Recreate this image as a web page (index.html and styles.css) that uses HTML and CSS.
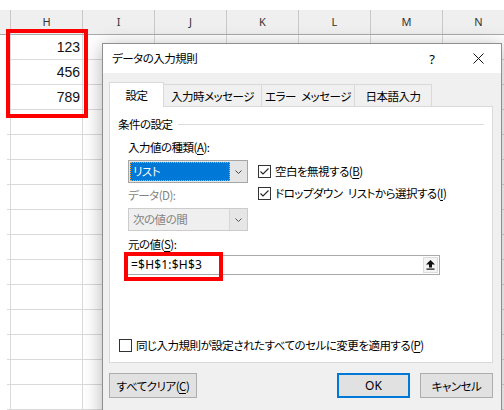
FILE: index.html
```html
<!DOCTYPE html>
<html lang="ja">
<head>
<meta charset="utf-8">
<title>データの入力規則</title>
<link rel="stylesheet" href="styles.css">
</head>
<body>
<div class="sheet">
  <div class="topband"></div>
  <div class="hdr">
    <div class="hcorner"></div>
    <div class="hc">H</div><div class="hc">I</div><div class="hc">J</div><div class="hc">K</div><div class="hc">L</div><div class="hc">M</div><div class="hc">N</div>
  </div>
  <div class="row"><div class="rh"></div><div class="c num">123</div><div class="c"></div><div class="c"></div><div class="c"></div><div class="c"></div><div class="c"></div><div class="c"></div></div>
  <div class="row"><div class="rh"></div><div class="c num">456</div><div class="c"></div><div class="c"></div><div class="c"></div><div class="c"></div><div class="c"></div><div class="c"></div></div>
  <div class="row"><div class="rh"></div><div class="c num">789</div><div class="c"></div><div class="c"></div><div class="c"></div><div class="c"></div><div class="c"></div><div class="c"></div></div>
  <div class="row"><div class="rh"></div><div class="c"></div><div class="c"></div><div class="c"></div><div class="c"></div><div class="c"></div><div class="c"></div><div class="c"></div></div>
  <div class="row"><div class="rh"></div><div class="c"></div><div class="c"></div><div class="c"></div><div class="c"></div><div class="c"></div><div class="c"></div><div class="c"></div></div>
  <div class="row"><div class="rh"></div><div class="c"></div><div class="c"></div><div class="c"></div><div class="c"></div><div class="c"></div><div class="c"></div><div class="c"></div></div>
  <div class="row"><div class="rh"></div><div class="c"></div><div class="c"></div><div class="c"></div><div class="c"></div><div class="c"></div><div class="c"></div><div class="c"></div></div>
  <div class="row"><div class="rh"></div><div class="c"></div><div class="c"></div><div class="c"></div><div class="c"></div><div class="c"></div><div class="c"></div><div class="c"></div></div>
  <div class="row"><div class="rh"></div><div class="c"></div><div class="c"></div><div class="c"></div><div class="c"></div><div class="c"></div><div class="c"></div><div class="c"></div></div>
  <div class="row"><div class="rh"></div><div class="c"></div><div class="c"></div><div class="c"></div><div class="c"></div><div class="c"></div><div class="c"></div><div class="c"></div></div>
  <div class="row"><div class="rh"></div><div class="c"></div><div class="c"></div><div class="c"></div><div class="c"></div><div class="c"></div><div class="c"></div><div class="c"></div></div>
  <div class="row"><div class="rh"></div><div class="c"></div><div class="c"></div><div class="c"></div><div class="c"></div><div class="c"></div><div class="c"></div><div class="c"></div></div>
  <div class="row"><div class="rh"></div><div class="c"></div><div class="c"></div><div class="c"></div><div class="c"></div><div class="c"></div><div class="c"></div><div class="c"></div></div>
  <div class="row"><div class="rh"></div><div class="c"></div><div class="c"></div><div class="c"></div><div class="c"></div><div class="c"></div><div class="c"></div><div class="c"></div></div>
  <div class="row"><div class="rh"></div><div class="c"></div><div class="c"></div><div class="c"></div><div class="c"></div><div class="c"></div><div class="c"></div><div class="c"></div></div>
</div>

<div class="mark mark-cells"></div>

<div class="dialog">
  <div class="titlebar">
    <span class="title">データの入力規則</span>
    <span class="capbtn help">?</span>
    <span class="capbtn close"><svg width="11" height="11" viewBox="0 0 11 11"><path d="M0.5 0.5 L10.5 10.5 M10.5 0.5 L0.5 10.5" stroke="#111" stroke-width="1" fill="none"/></svg></span>
  </div>
  <div class="dbody">
    <div class="tabs">
      <div class="tab sel t1">設定</div>
      <div class="tab t2">入力時メッセージ</div>
      <div class="tab t3">エラー&ensp;メッセージ</div>
      <div class="tab t4">日本語入力</div>
    </div>
    <div class="panel">
      <div class="legend"><span>条件の設定</span><i class="rule"></i></div>
      <div class="group">
        <div class="lbl lbl-first">入力値の種類(<u>A</u>):</div>
        <div class="cols">
          <div class="left">
            <div class="combo active">
              <span class="ctext">リスト</span>
              <span class="carrow"><svg width="7" height="4" viewBox="0 0 7 4"><polyline points="0.5,0.5 3.5,3.5 6.5,0.5" stroke="#444" stroke-width="1" fill="none"/></svg></span>
            </div>
            <div class="lbl dis lbl-data">データ(D):</div>
            <div class="combo disabled">
              <span class="ctext">次の値の間</span>
              <span class="carrow"><svg width="7" height="4" viewBox="0 0 7 4"><polyline points="0.5,0.5 3.5,3.5 6.5,0.5" stroke="#555" stroke-width="1" fill="none"/></svg></span>
            </div>
          </div>
          <div class="right">
            <div class="cb"><span class="box"><svg width="11" height="11" viewBox="0 0 11 11"><polyline points="1.5,5.5 4,8 9.5,2.5" stroke="#222" stroke-width="1.1" fill="none"/></svg></span><span>空白を無視する(<u>B</u>)</span></div>
            <div class="cb cb-second"><span class="box"><svg width="11" height="11" viewBox="0 0 11 11"><polyline points="1.5,5.5 4,8 9.5,2.5" stroke="#222" stroke-width="1.1" fill="none"/></svg></span><span>ドロップダウン&ensp;リストから選択する(<u>I</u>)</span></div>
          </div>
        </div>
        <div class="lbl lbl-src">元の値(<u>S</u>):</div>
        <div class="field">
          <span class="ftext">=$H$1:$H$3</span>
          <span class="fbtn"><svg width="9" height="10" viewBox="0 0 9 10"><polygon points="4.5,0 9,4.5 6,4.5 6,7.5 3,7.5 3,4.5 0,4.5" fill="#111"/><rect x="0.5" y="8.5" width="8" height="1.2" fill="#111"/></svg></span>
          <div class="mark mark-field"></div>
        </div>
      </div>
      <div class="cb cb-bottom"><span class="box"></span><span>同じ入力規則が設定されたすべてのセルに変更を適用する(<u>P</u>)</span></div>
    </div>
    <div class="buttons">
      <button class="btn btn-clear">すべてクリア(<u>C</u>)</button>
      <span class="spacer"></span>
      <button class="btn btn-ok">OK</button>
      <button class="btn btn-cancel">キャンセル</button>
    </div>
  </div>
</div>
</body>
</html>
```

FILE: styles.css
```css
html, body {
  margin: 0;
  padding: 0;
  overflow: hidden;
  width: 504px;
  height: 410px;
  background: #ffffff;
}

body {
  position: relative;
  font-family: "Noto Sans CJK JP", "Noto Sans", sans-serif;
}

/* ---------- spreadsheet ---------- */
.sheet {
  width: 520px;
}

.topband {
  height: 10px;
  background: #ffffff;
}

.hdr {
  display: flex;
  height: 25px;
  box-sizing: border-box;
  background: #efefef;
  border-bottom: 1px solid #ababab;
}

.hcorner {
  width: 10px;
  flex: none;
}

.hc {
  width: 72px;
  flex: none;
  box-sizing: border-box;
  border-left: 1px solid #c9c9c9;
  text-align: center;
  line-height: 23px;
  font-family: "Noto Sans", "Liberation Sans", sans-serif;
  font-size: 11px;
  color: #333;
}

.row {
  display: flex;
  height: 25px;
}

.rh {
  width: 3px;
  margin-left: 7px;
  flex: none;
  box-sizing: border-box;
  border-bottom: 1px solid #dadada;
}

.c {
  width: 72px;
  flex: none;
  box-sizing: border-box;
  border-left: 1px solid #dadada;
  border-bottom: 1px solid #dadada;
}

.num {
  text-align: right;
  padding-right: 2px;
  font-family: "Liberation Sans", Arial, sans-serif;
  font-size: 14px;
  line-height: 24px;
  color: #111;
}

/* red highlight marks */
.mark {
  position: absolute;
  box-sizing: border-box;
  border: 4px solid #ff0000;
  pointer-events: none;
}

.mark-cells {
  left: 6px;
  top: 29px;
  width: 82px;
  height: 89px;
  z-index: 3;
}

.mark-field {
  left: -4px;
  top: -4px;
  width: 99px;
  height: 29px;
}

/* ---------- dialog ---------- */
.dialog {
  position: absolute;
  left: 102px;
  top: 43px;
  width: 400px;
  height: 380px;
  box-sizing: border-box;
  border: 1px solid #8f8f8f;
  background: #f0f0f0;
  box-shadow: 0 3px 18px rgba(0, 0, 0, 0.30);
  z-index: 2;
  font-size: 11.5px;
  letter-spacing: -0.5px;
  line-height: 16px;
  color: #000;
  font-feature-settings: "palt";
}

.titlebar {
  display: flex;
  align-items: center;
  height: 29px;
  background: #ffffff;
}

.title {
  flex: 1;
  padding-left: 9px;
  line-height: 29px;
}

.capbtn {
  width: 46px;
  height: 29px;
  display: flex;
  align-items: center;
  justify-content: center;
}

.help {
  font-family: "Noto Sans", "Liberation Sans", sans-serif;
  font-size: 13px;
  letter-spacing: 0;
}

.dbody {
  padding: 9px 8px 0 6px;
}

.tabs {
  display: flex;
  align-items: flex-end;
  height: 24px;
}

.tab {
  box-sizing: border-box;
  height: 22px;
  padding-top: 3px;
  text-align: center;
  white-space: nowrap;
  background: #f0f0f0;
  border: 1px solid #d9d9d9;
  border-bottom: none;
  border-left: none;
}

.tab.sel {
  height: 25px;
  padding-top: 4px;
  margin-bottom: -1px;
  position: relative;
  z-index: 1;
  background: #ffffff;
  border-left: 1px solid #d9d9d9;
}

.t1 { width: 55px; }
.t2 { width: 98px; }
.t3 { width: 93px; }
.t4 { width: 77px; }

.panel {
  display: flex;
  flex-direction: column;
  height: 257px;
  box-sizing: border-box;
  padding: 9px 8px 9px 8px;
  background: #ffffff;
  border: 1px solid #d9d9d9;
}

.legend {
  display: flex;
  align-items: center;
  height: 16px;
}

.rule {
  flex: 1;
  height: 1px;
  margin-left: 5px;
  background: #dcdcdc;
}

.group {
  margin-left: 10px;
}

.lbl {
  height: 16px;
  white-space: nowrap;
}

.lbl-first { margin-top: 7px; }
.lbl-data { margin-top: 4px; }
.lbl-src { margin-top: 5px; }

.dis { color: #838383; }

.cols {
  display: flex;
  gap: 10px;
  margin-top: 5px;
}

.left {
  width: 120px;
  flex: none;
}

.right {
  padding-top: 3px;
}

.combo {
  display: flex;
  height: 23px;
  box-sizing: border-box;
  border: 1px solid #a6a6a6;
}

.combo.active {
  background: #e5e5e5;
  padding: 1px 0 1px 1px;
}

.combo.active .ctext {
  flex: 1;
  box-sizing: border-box;
  background: #0078d7;
  color: #ffffff;
  border: 1px dotted #f7a23a;
  padding-left: 2px;
  line-height: 17px;
}

.combo.disabled {
  margin-top: 5px;
  border-color: #cccccc;
  background: #efefef;
}

.combo.disabled .ctext {
  flex: 1;
  color: #838383;
  padding-left: 4px;
  line-height: 21px;
}

.carrow {
  width: 17px;
  flex: none;
  display: flex;
  align-items: center;
  justify-content: center;
}

.combo.disabled .carrow {
  border-left: 1px solid #d6d6d6;
  background: #e6e6e6;
}

.cb {
  display: flex;
  align-items: center;
  height: 16px;
  white-space: nowrap;
}

.cb-second { margin-top: 6px; }

.box {
  width: 13px;
  height: 13px;
  flex: none;
  box-sizing: border-box;
  border: 1px solid #333333;
  background: #ffffff;
  margin-right: 4px;
  display: flex;
  align-items: center;
  justify-content: center;
}

.cb-bottom {
  margin-top: auto;
  margin-left: 1px;
}

.field {
  position: relative;
  display: flex;
  align-items: center;
  width: 313px;
  height: 20px;
  margin-top: 3px;
  margin-left: -1px;
  box-sizing: border-box;
  border: 1px solid #a9a9a9;
  background: #ffffff;
}

.ftext {
  flex: 1;
  padding-left: 3px;
  font-family: "Noto Sans", "Liberation Sans", sans-serif;
  font-size: 12px;
  letter-spacing: 0.2px;
  line-height: 18px;
  font-feature-settings: normal;
}

.fbtn {
  width: 15px;
  height: 16px;
  margin-right: 1px;
  box-sizing: border-box;
  border: 1px solid #dcdcdc;
  background: #f4f4f4;
  display: flex;
  align-items: center;
  justify-content: center;
}

.buttons {
  display: flex;
  gap: 10px;
  margin-top: 10px;
}

.spacer { flex: 1; }

.btn {
  height: 25px;
  box-sizing: border-box;
  padding: 0;
  margin: 0;
  font-family: inherit;
  font-size: 11.5px;
  letter-spacing: -0.5px;
  line-height: 16px;
  font-feature-settings: "palt";
  color: #000;
  background: #e1e1e1;
  border: 1px solid #adadad;
  border-radius: 0;
}

.btn-clear { width: 88px; }
.btn-ok {
  width: 73px;
  border-color: #0078d7;
  box-shadow: inset 0 0 0 1px #0078d7;
  font-family: "Noto Sans", "Liberation Sans", sans-serif;
  font-size: 12px;
  letter-spacing: 0;
}
.btn-cancel { width: 73px; }

u {
  text-decoration: underline;
  text-underline-offset: 2px;
}
```
